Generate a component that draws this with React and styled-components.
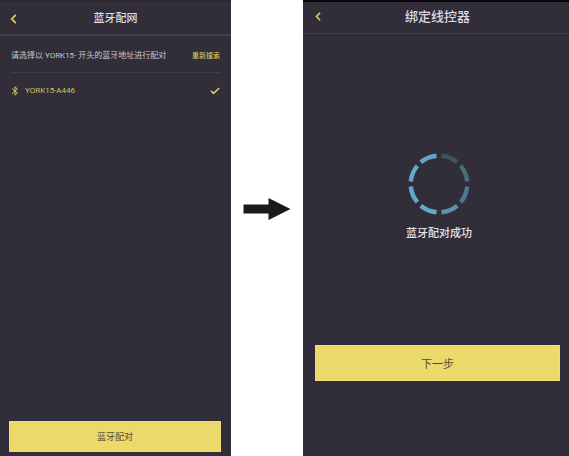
import styled, { createGlobalStyle } from "styled-components"

const GlobalStyle = createGlobalStyle`
  * { box-sizing: border-box; }
  body {
    margin: 0;
    background: #ffffff;
    font-family: Roboto, "Noto Sans CJK SC", sans-serif;
  }
`
const Page = styled.main`
  display: grid;
  grid-template-columns: 231fr 72fr 266fr;
  min-height: 100vh;
`
const Screen = styled.section`
  display: flex;
  flex-direction: column;
  min-width: 0;
  background: #322e39;
  border-top: 2px solid ${({ $edge }) => $edge};
`
const Header = styled.header`
  display: grid;
  grid-template-columns: 20px 1fr 20px;
  align-items: center;
  height: ${({ $height }) => $height}px;
  padding: ${({ $padding }) => $padding};
  border-bottom: ${({ $line }) => $line}px solid #433f4a;
`
const Title = styled.h1`
  margin: 0;
  font-size: ${({ $size }) => $size}px;
  font-weight: 500;
  line-height: 20px;
  text-align: center;
  color: #dedbe2;
`
const BackButton = styled.button`
  display: flex;
  align-items: center;
  justify-content: center;
  height: 20px;
  padding: 0;
  border: none;
  background: none;
  color: #e3cf63;
`
const HintRow = styled.div`
  display: flex;
  align-items: center;
  justify-content: space-between;
  height: 37px;
  margin: 0 11px;
  padding-top: 3px;
  border-bottom: 1px solid #413c48;
`
const Hint = styled.p`
  margin: 0;
  font-size: 8px;
  line-height: 12px;
  white-space: nowrap;
  color: #c8c5cd;
`
const SearchButton = styled.button`
  padding: 0;
  border: none;
  background: none;
  font-family: inherit;
  font-size: 7px;
  font-weight: 500;
  line-height: 12px;
  white-space: nowrap;
  color: #d3c05e;
`
const DeviceList = styled.ul`
  flex: 1;
  margin: 0;
  padding: 0 11px;
  list-style: none;
`
const Device = styled.li`
  display: flex;
  align-items: center;
  gap: 6px;
  height: 35px;
  font-size: 8px;
  color: #d3c05e;
`
const DeviceName = styled.span`
  flex: 1;
`
const ActionButton = styled.button`
  height: ${({ $height }) => $height}px;
  margin: ${({ $margin }) => $margin};
  padding: 0;
  border: 1px solid #f0de72;
  background: #ecd96b;
  font-family: inherit;
  font-size: ${({ $size }) => $size}px;
  color: #554d35;
`
const Between = styled.div`
  display: flex;
  align-items: center;
  justify-content: center;
  padding-bottom: 38px;
`
const Progress = styled.div`
  flex: 1;
  display: flex;
  flex-direction: column;
  align-items: center;
  gap: 9px;
  padding: 119px 0 0 6px;
`
const Status = styled.p`
  margin: 0;
  font-size: 11px;
  font-weight: 500;
  line-height: 20px;
  color: #e2e0e5;
`

const BackIcon = ({ size }) => (
  <svg width={size} height={size} viewBox="0 0 10 10" fill="none" stroke="currentColor" strokeWidth="1.7">
    <path d="M6.8 0.8 L2.8 5 L6.8 9.2" />
  </svg>
)

const BluetoothIcon = () => (
  <svg width="8" height="10" viewBox="0 0 8 10" fill="none" stroke="currentColor" strokeWidth="1">
    <path d="M1 2.4 L6.4 7 L4 9.2 V0.8 L6.4 3 L1 7.6" />
  </svg>
)

const CheckIcon = () => (
  <svg width="10" height="8" viewBox="0 0 10 8" fill="none" stroke="#e3cf63" strokeWidth="1.5">
    <path d="M0.8 3.8 L3.6 6.4 L9.2 1" />
  </svg>
)

const Arrow = () => (
  <svg width="48" height="24" viewBox="0 0 48 24" fill="#1d191b">
    <path d="M0.5 7.5 H25.5 V1 L47.5 12 L25.5 23 V16.5 H0.5 Z" />
  </svg>
)

// clockwise from twelve o'clock
const ringColors = ["#3e5260", "#4c6d80", "#50788f", "#5b93ad", "#64a9cc", "#64a9cc", "#64a9cc", "#62a5c6"]

const Ring = () => (
  <svg width="62" height="62" viewBox="-31 -31 62 62" fill="none" strokeWidth="4.4">
    {ringColors.map((color, i) => (
      <path key={i} d="M2.5 -28.2 A28.3 28.3 0 0 1 18.2 -21.7" stroke={color} transform={`rotate(${i * 45})`} />
    ))}
  </svg>
)

export default function App() {
  return (
    <>
      <GlobalStyle />
      <Page>
        <Screen $edge="#2b2732">
          <Header $height={34} $line={2} $padding="1px 4px 0">
            <BackButton aria-label="返回"><BackIcon size={10} /></BackButton>
            <Title $size={11}>蓝牙配网</Title>
          </Header>
          <HintRow>
            <Hint>请选择以 YORK15- 开头的蓝牙地址进行配对</Hint>
            <SearchButton>重新搜索</SearchButton>
          </HintRow>
          <DeviceList>
            <Device>
              <BluetoothIcon />
              <DeviceName>YORK15-A446</DeviceName>
              <CheckIcon />
            </Device>
          </DeviceList>
          <ActionButton $height={31} $margin="0 10px 4px 9px" $size={9}>蓝牙配对</ActionButton>
        </Screen>
        <Between>
          <Arrow />
        </Between>
        <Screen $edge="#08070b">
          <Header $height={32} $line={1} $padding="0 2px 2px 5px">
            <BackButton aria-label="返回"><BackIcon size={9} /></BackButton>
            <Title $size={13}>绑定线控器</Title>
          </Header>
          <Progress>
            <Ring />
            <Status role="status">蓝牙配对成功</Status>
          </Progress>
          <ActionButton $height={36} $margin="0 9px 75px 12px" $size={11}>下一步</ActionButton>
        </Screen>
      </Page>
    </>
  )
}
